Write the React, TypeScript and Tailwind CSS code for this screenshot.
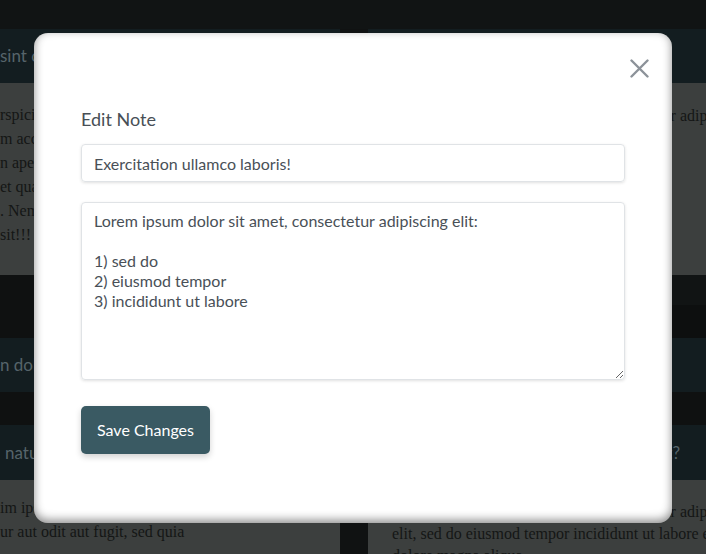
const serif = { fontFamily: '"Liberation Serif", serif' };

export default function App() {
  return (
    <div className="relative w-[706px] h-[554px] overflow-hidden bg-[#0f1111] font-['Lato',sans-serif]">
      {/* Page behind the dialog (already dimmed) */}
      <div className="h-[29px] bg-[#111414]" />
      <div className="flex">
        {/* Left column */}
        <div className="w-[340px] flex flex-col overflow-hidden">
          <div className="h-[54px] bg-[#131d20] flex items-center whitespace-nowrap text-[17px] text-[#56646a]">
            sint occaecat cupidatat non proident
          </div>
          <div className="h-[192px] bg-[#3c3f3e] pt-[20px] text-[16px] leading-[24px] text-[#141615] whitespace-nowrap" style={serif}>
            <div>rspiciatis unde omnis iste natus error sit</div>
            <div>m accusantium doloremque laudantium, totam</div>
            <div>n aperiam, eaque ipsa quae ab illo inventore</div>
            <div>et quasi architecto beatae vitae dicta sunt</div>
            <div>. Nemo enim ipsam voluptatem quia voluptas</div>
            <div>sit!!!</div>
          </div>
          <div className="h-[63px]" />
          <div className="h-[54px] bg-[#131d20] flex items-center whitespace-nowrap text-[17px] text-[#56646a]">
            n dolor in reprehenderit in voluptate
          </div>
          <div className="h-[33px]" />
          <div className="h-[55px] bg-[#131d20] flex items-center pl-[5px] whitespace-nowrap text-[17px] text-[#56646a]">
            natus error sit voluptatem accusantium
          </div>
          <div className="h-[80px] bg-[#3c3f3e] pt-[16px] text-[16px] leading-[24px] text-[#141615]" style={serif}>
            <div className="whitespace-nowrap">im ipsam voluptatem quia voluptas sit aspernat</div>
            <div className="whitespace-nowrap">ur aut odit aut fugit, sed quia</div>
          </div>
        </div>
        <div className="w-[28px] bg-[#101212]" />
        {/* Right column */}
        <div className="flex-1 flex flex-col overflow-hidden">
          <div className="h-[54px] bg-[#131d20]" />
          <div className="h-[192px] bg-[#3c3f3e] px-[24px] pt-[21px] text-[16px] leading-[23px] text-[#141615] whitespace-nowrap" style={serif}>
            Lorem ipsum dolor sit amet, sed consectetur adipiscing
          </div>
          <div className="h-[30px] bg-[#111414]" />
          <div className="h-[33px] bg-[#0d0f0f]" />
          <div className="h-[54px] bg-[#131d20]" />
          <div className="h-[33px]" />
          <div className="h-[55px] bg-[#131d20] flex items-center justify-end pr-[26px] whitespace-nowrap text-[17px] text-[#56646a]">
            Quis autem vel eum iure reprehenderit?
          </div>
          <div className="h-[80px] bg-[#3c3f3e] px-[24px] pt-[21px] text-[16px] leading-[22px] text-[#141615] whitespace-nowrap" style={serif}>
            <div>Lorem ipsum dolor sit amet, sed consectetur adipiscing</div>
            <div>elit, sed do eiusmod tempor incididunt ut labore et</div>
            <div>dolore magna aliqua.</div>
          </div>
        </div>
      </div>

      {/* Dialog */}
      <div className="fixed inset-0 flex items-center justify-center pt-[2px]">
        <div className="relative w-[638px] h-[490px] rounded-[14px] bg-white shadow-[inset_0_-3px_10px_rgba(0,0,0,0.45)] px-[47px] pt-[72px]">
          <button className="absolute top-[26px] right-[23px] text-[#8c9299]">
            <svg width="19" height="19" viewBox="0 0 19 19" fill="none" stroke="currentColor" strokeWidth="2.4" strokeLinecap="round">
              <path d="M1.5 1.5 17.5 17.5M17.5 1.5 1.5 17.5" />
            </svg>
          </button>
          <h2 className="text-[18px] leading-[28px] text-[#484f56] mb-[11px]">Edit Note</h2>
          <input
            className="block w-full h-[38px] px-[12px] rounded-[4px] border border-[#e0e3e6] shadow-[0_1px_3px_rgba(0,0,0,0.12)] text-[16px] text-[#495057] outline-none"
            defaultValue="Exercitation ullamco laboris!"
          />
          <textarea
            className="block w-full h-[178px] mt-[20px] px-[12px] py-[8px] rounded-[4px] border border-[#e0e3e6] shadow-[0_1px_3px_rgba(0,0,0,0.12)] text-[16px] leading-[20px] text-[#495057] outline-none"
            defaultValue={'Lorem ipsum dolor sit amet, consectetur adipiscing elit:\n\n1) sed do\n2) eiusmod tempor\n3) incididunt ut labore'}
          />
          <button className="mt-[26px] h-[48px] px-[16px] rounded-[5px] bg-[#3a5a63] text-white text-[16px] shadow-[0_3px_6px_rgba(0,0,0,0.18)]">
            Save Changes
          </button>
        </div>
      </div>
    </div>
  );
}
